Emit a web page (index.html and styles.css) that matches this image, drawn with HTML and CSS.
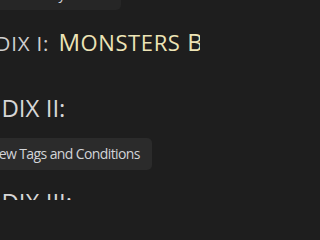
FILE: index.html
```html
<!DOCTYPE html>
<html>
<head>
<meta charset="utf-8">
<link rel="stylesheet" href="styles.css">
</head>
<body>
<div class="page">
  <div class="section">
    <button class="btn btn-top">View History Tables</button>
  </div>
  <h2 class="heading heading-first"><span class="muted">Appendix I:</span> <span class="accent"><span class="cap">M</span><span class="sc">onsters</span> <span class="cap">B</span><span class="sc">y</span> <span class="cap">T</span><span class="sc">ype</span></span></h2>
  <h2 class="heading heading-caps">APPENDIX II:</h2>
  <div class="section">
    <button class="btn">View Tags and Conditions</button>
  </div>
  <h2 class="heading heading-caps">APPENDIX III:</h2>
</div>
</body>
</html>
```

FILE: styles.css
```css
html, body {
  margin: 0;
  padding: 0;
  background: #1e1e1e;
  width: 200px;
  height: 200px;
  overflow: hidden;
}
body {
  font-family: "Open Sans", "Noto Sans", sans-serif;
  color: #d4d4d4;
}
.page {
  margin-left: -74px;
  margin-top: -22px;
  width: 274px;
}
.section {
  display: flex;
  padding-left: 50px;
}
.btn {
  font-family: "Open Sans", "Noto Sans", sans-serif;
  font-size: 14px;
  letter-spacing: -0.6px;
  line-height: 20px;
  height: 32px;
  padding: 6px 12px;
  border: none;
  border-radius: 5px;
  background: #2b2b2b;
  color: #d2d4d8;
  white-space: nowrap;
  flex: none;
}
.btn-top {
  background: #262626;
  letter-spacing: -0.3px;
}
.heading {
  font-size: 24px;
  line-height: 32px;
  font-weight: 400;
  margin: 16px 0 14px;
  white-space: nowrap;
}
.heading-first {
  margin-bottom: 33px;
  padding-left: 1px;
}
.muted {
  color: #cfcfcf;
  font-size: 20.5px;
  letter-spacing: 0.8px;
  text-transform: uppercase;
}
.accent {
  color: #ede4b6;
  letter-spacing: 0.6px;
  margin-left: 3px;
}
.sc {
  font-size: 22px;
  text-transform: uppercase;
}
.heading-caps {
  color: #d6d6d6;
}
```
